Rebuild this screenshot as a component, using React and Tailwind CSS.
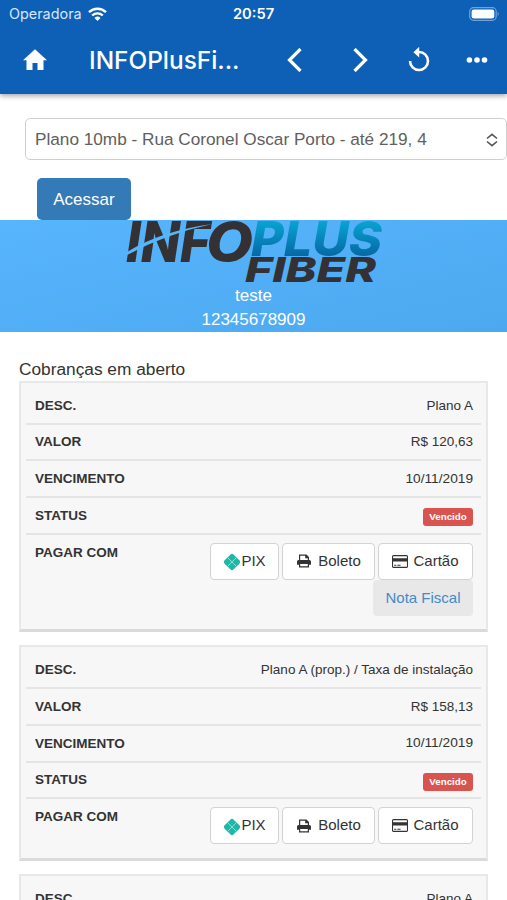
import React from 'react';

const charges = [
  { desc: 'Plano A', valor: 'R$ 120,63', vencimento: '10/11/2019', status: 'Vencido', notaFiscal: true },
  { desc: 'Plano A (prop.) / Taxa de instalação', valor: 'R$ 158,13', vencimento: '10/11/2019', status: 'Vencido' },
  { desc: 'Plano A', valor: 'R$ 120,63', vencimento: '10/12/2019', status: 'Vencido' },
];

function PixIcon() {
  return (
    <svg className="mt-[2px] h-[18px] w-[18px] shrink-0" viewBox="0 0 18 18">
      <rect x="2.6" y="2.6" width="12.8" height="12.8" rx="2.4" transform="rotate(45 9 9)" fill="#1fb8a8" />
      <path d="M4.2 4.2l9.6 9.6M13.8 4.2l-9.6 9.6" fill="none" stroke="#9fe0d9" strokeWidth=".9" />
    </svg>
  );
}

function PrintIcon() {
  return (
    <svg className="h-[14px] w-[14px] shrink-0" viewBox="0 0 14 14" fill="none" stroke="currentColor">
      <path d="M2.6 7V1.1h6.6l2.2 2.2V7M8.8 1.1v2.6h2.6" strokeWidth="1.2" />
      <path d="M0 10.8V7.6Q0 6 1.6 6h10.8Q14 6 14 7.6v3.2h-2.4V9.3H2.4v1.5z" fill="currentColor" stroke="none" />
      <path d="M2.6 9.3h8.8v3.5H2.6z" strokeWidth="1.2" />
    </svg>
  );
}

function CardIcon() {
  return (
    <svg className="h-[13px] w-4 shrink-0" viewBox="0 128 1920 1536" fill="currentColor">
      <path d="M1760 128q66 0 113 47t47 113v1216q0 66-47 113t-113 47h-1600q-66 0-113-47t-47-113v-1216q0-66 47-113t113-47h1600zM160 256q-13 0-22.5 9.5t-9.5 22.5v224h1664v-224q0-13-9.5-22.5t-22.5-9.5h-1600zM1760 1536q13 0 22.5-9.5t9.5-22.5v-608h-1664v608q0 13 9.5 22.5t22.5 9.5h1600zM256 1408v-128h256v128h-256zM640 1408v-128h384v128h-384z" />
    </svg>
  );
}

function Logo() {
  return (
    <svg className="h-[64px] w-[262px] shrink-0" viewBox="0 0 262 64" fontFamily="Inter, sans-serif" fontWeight="800" fontStyle="italic">
      <defs>
        <linearGradient id="plus" x1="0" y1="0" x2="0" y2="1">
          <stop offset="0.2" stopColor="#07a5d3" />
          <stop offset="0.8" stopColor="#0767a4" />
        </linearGradient>
      </defs>
      <text x="3" y="42" fontSize="56" textLength="84" lengthAdjust="spacingAndGlyphs" fill="#343135">INF</text>
      <text x="83" y="41" fontSize="54" textLength="47" lengthAdjust="spacingAndGlyphs" fill="#343135">O</text>
      <text x="128" y="36" fontSize="48" textLength="131" lengthAdjust="spacingAndGlyphs" fill="url(#plus)">PLUS</text>
      <text x="122" y="62" fontSize="34" textLength="131" lengthAdjust="spacingAndGlyphs" fill="#343135">FIBER</text>
      <path d="M4 32Q38 11 89 4Q43 14 4 35z" fill="#58b5fa" />
    </svg>
  );
}

function Row({ label, children }) {
  return (
    <div className="flex h-[36.7px] items-center justify-between border-b-2 border-[#e5e5e5] pt-px pr-2 pl-[9px] text-[13.5px]">
      <b>{label}</b>
      {children}
    </div>
  );
}

function PayButton({ className, children }) {
  return (
    <button className={`flex h-[37px] items-center justify-center rounded-[4px] border-[1.5px] border-[#d3d3d3] bg-white text-[15px] ${className}`}>
      {children}
    </button>
  );
}

function ChargeCard({ charge }) {
  return (
    <div className="mb-[13px] border-2 border-b-[3px] border-[#e8e8e8] border-b-[#dadada] bg-[#f7f7f7] px-[5px] pt-[5px]">
      <Row label="DESC."><span>{charge.desc}</span></Row>
      <Row label="VALOR"><span>{charge.valor}</span></Row>
      <Row label="VENCIMENTO"><span className="text-[13.7px]">{charge.vencimento}</span></Row>
      <Row label="STATUS">
        <span className="mt-[3px] flex h-[18px] w-[50px] items-center justify-center rounded-[3px] bg-[#d9534f] text-[9.8px] font-bold text-white">{charge.status}</span>
      </Row>
      <div className="flex justify-between pt-2 pr-2 pb-[13.7px] pl-[9px]">
        <b className="text-[13.5px] leading-[20px]">PAGAR COM</b>
        <div className="flex flex-col items-end">
          <div className="flex gap-[3px]">
            <PayButton className="w-[69px]"><PixIcon />PIX</PayButton>
            <PayButton className="w-[93px] gap-[7px] pl-px"><PrintIcon />Boleto</PayButton>
            <PayButton className="w-[95px] gap-[5px]"><CardIcon />Cartão</PayButton>
          </div>
          {charge.notaFiscal && (
            <a className="flex h-[36px] w-[100px] items-center justify-center rounded-[4px] bg-[#e8e8e8] text-[15px] text-[#428bca]">Nota Fiscal</a>
          )}
        </div>
      </div>
    </div>
  );
}

export default function App() {
  return (
    <div className="h-[900px] w-[507px] overflow-hidden bg-white font-['Liberation_Sans',sans-serif] text-[#333]">
      {/* HEADER */}
      <header className="relative h-[94px] bg-[#0d60b6] font-['Inter',sans-serif] text-white shadow-[0_2px_5px_rgba(0,0,0,0.35)]">
        <div className="grid h-7 grid-cols-3 items-center pr-[7px] pl-[9px]">
          <div className="flex items-center gap-[6px] text-[14.4px] text-[#d5e5f6]">
            Operadora
            <svg className="h-[14px] w-[19px]" viewBox="0 0 19 14" fill="none" stroke="white" strokeWidth="2.4">
              <path d="M1 5.2a12.2 12.2 0 0 1 17 0M4.2 8.5a7.6 7.6 0 0 1 10.6 0" />
              <path d="M9.5 14l-3-3.1a4.3 4.3 0 0 1 6 0z" fill="white" stroke="none" />
            </svg>
          </div>
          <div className="pr-[2px] text-center text-[14.7px] font-semibold">20:57</div>
          <svg className="h-[14px] w-[31px] justify-self-end" viewBox="0 0 31 14">
            <rect x=".7" y=".7" width="26.5" height="12.6" rx="3.8" fill="none" stroke="#6fa3d8" strokeWidth="1.2" />
            <rect x="2.6" y="2.5" width="22.7" height="9" rx="2.2" fill="white" />
            <path d="M28.7 4.8q2 2.2 0 4.4z" fill="#6fa3d8" />
          </svg>
        </div>
        <div className="flex h-[64px] items-center">
          <svg className="ml-[23px] h-[22px] w-6" viewBox="0 0 24 22" fill="white"><path d="M9.5 21v-7h5v7h6V11.2H24L12 .3 0 11.2h3.5V21z" /></svg>
          <h1 className="ml-[42px] w-[152px] text-[24.4px] font-medium whitespace-nowrap">INFOPlusFi...</h1>
          <svg className="ml-[46px] h-6 w-4" viewBox="0 0 16 24" fill="none" stroke="white" strokeWidth="3.2"><path d="M13.5 1L2.5 12l11 11" /></svg>
          <svg className="ml-[49px] h-6 w-4" viewBox="0 0 16 24" fill="none" stroke="white" strokeWidth="3.2"><path d="M2.5 1l11 11-11 11" /></svg>
          <svg className="ml-[40px] h-[26px] w-[22px]" viewBox="0 0 22 26"><path d="M2 14a9 9 0 1 0 9-9" fill="none" stroke="white" strokeWidth="2.6" /><path d="M11.2-.2v10.8L5.4 5.2z" fill="white" /></svg>
          <svg className="ml-[36px] h-[6px] w-[22px]" viewBox="0 0 22 6" fill="white"><circle cx="3.4" cy="3" r="2.8" /><circle cx="11" cy="3" r="2.8" /><circle cx="18.5" cy="3" r="2.8" /></svg>
        </div>
      </header>

      {/* PLANO */}
      <div className="pt-[24px] pl-[25px]">
        <div className="flex h-[42px] items-center justify-between rounded-[5px] border-[1.5px] border-[#cfcfcf] pt-[2px] pr-[8px] pl-[9px] text-[17.2px] text-[#606060]">
          Plano 10mb - Rua Coronel Oscar Porto - até 219, 4
          <svg className="h-[14px] w-3" viewBox="0 0 12 14" fill="none" stroke="#555" strokeWidth="1.6"><path d="M1 5.5l5-4.2 5 4.2M1 8.5l5 4.2 5-4.2" /></svg>
        </div>
        <button className="mt-[18px] ml-[12px] block h-[42px] w-[94px] rounded-[5px] bg-[#337ab7] pt-[2px] text-[17px] text-white">Acessar</button>
      </div>

      {/* CLIENTE */}
      <section className="flex h-[112px] flex-col items-center bg-linear-to-br from-[#57b5fd] to-[#4ca9f0] text-[17px] leading-6 text-white">
        <Logo />
        <div>teste</div>
        <div>12345678909</div>
      </section>

      {/* COBRANÇAS */}
      <main className="px-[19px] pt-[26px]">
        <h2 className="text-[17.3px] leading-[23px]">Cobranças em aberto</h2>
        {charges.map((charge, i) => <ChargeCard key={i} charge={charge} />)}
      </main>
    </div>
  );
}
